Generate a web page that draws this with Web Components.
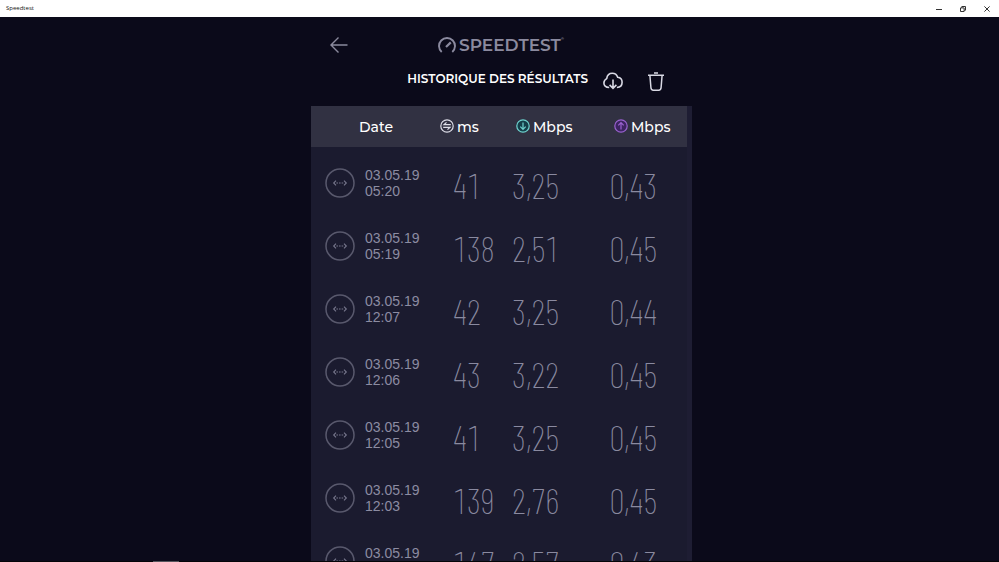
<!DOCTYPE html>
<html lang="fr">
<head>
<meta charset="utf-8">
<meta name="viewport" content="width=device-width, initial-scale=1">
<title>Speedtest</title>
<style>
  body { margin: 0; background: #0b0a1a; font-family: "Montserrat", "Noto Sans", sans-serif; color: #fff; -webkit-font-smoothing: antialiased; }
</style>
</head>
<body>
<speedtest-app></speedtest-app>

<template id="app">
  <style>
    :host { display: flex; flex-direction: column; height: 100vh; overflow: hidden; }
    main { flex: 1; min-height: 0; display: flex; flex-direction: column; box-sizing: border-box; width: 100%; max-width: 385px; margin: 0 auto; padding-left: 4px; }
    results-table { flex: 1; min-height: 0; }
  </style>
  <window-bar>Speedtest</window-bar>
  <main>
    <app-header>Historique des résultats</app-header>
    <results-table></results-table>
  </main>
  <task-edge></task-edge>
</template>

<template id="bar">
  <style>
    :host { display: flex; justify-content: space-between; align-items: center; height: 17px; flex: none; background: #fff; color: #111; font: 6px/17px "Open Sans", "Noto Sans", sans-serif; }
    .name { padding-left: 6px; }
    .controls { display: flex; }
    button { width: 24px; height: 17px; padding: 0; border: 0; background: none; color: #333; display: grid; place-items: center; }
    svg { width: 6px; height: 6px; fill: none; stroke: currentColor; }
  </style>
  <span class="name"><slot></slot></span>
  <div class="controls">
    <button aria-label="Réduire"><svg viewBox="0 0 6 6"><path d="M0 3.5h6"/></svg></button>
    <button aria-label="Restaurer"><svg viewBox="0 0 6 6"><path d="M.5 1.9h3.6v3.6H.5zM1.8 1.9V.5h3.7v3.7H4.1"/></svg></button>
    <button aria-label="Fermer"><svg viewBox="0 0 6 6"><path d="M.4.4l5.2 5.2M5.6.4L.4 5.6"/></svg></button>
  </div>
</template>

<template id="header">
  <style>
    :host { display: block; height: 89px; flex: none; margin-right: 5px; }
    button { padding: 0; border: 0; background: none; color: #d9d9e4; display: grid; place-items: center; }
    svg { display: block; fill: none; stroke: currentColor; }
    .top { display: grid; grid-template-columns: 56px 1fr 56px; align-items: center; padding-top: 16px; height: 24px; }
    .back { width: 56px; height: 24px; color: #8b8a9d; }
    .logo { display: flex; justify-content: center; align-items: center; gap: 3px; margin-left: 4px; color: #8b8a9f; font: 600 17px/24px "Montserrat", "Inter", sans-serif; }
    .brand { display: flex; }
    .brand sup { font-size: 4px; line-height: 12px; }
    .sub { display: flex; align-items: center; justify-content: flex-end; height: 24px; padding: 12px 22px 0 0; }
    h1 { margin: 0 15px 4px 0; font: 600 12px/20px "Montserrat", "Inter", sans-serif; text-transform: uppercase; white-space: nowrap; }
    .cloud { margin-right: 24px; }
  </style>
  <div class="top">
    <button class="back" aria-label="Retour"><svg width="18" height="16" viewBox="0 0 18 16" stroke-width="1.4"><path d="M17.5 8H1M8.5.6L1 8l7.5 7.4"/></svg></button>
    <div class="logo">
      <svg width="18" height="16" viewBox="0 0 18 16" stroke-width="1.9"><path d="M3.7 15A8 8 0 1 1 14.3 15"/><path d="M8 10l4.8-4.6" stroke-width="2.2"/></svg>
      <span class="brand">SPEEDTEST<sup>®</sup></span>
    </div>
  </div>
  <div class="sub">
    <h1><slot></slot></h1>
    <button class="cloud" aria-label="Télécharger"><svg width="20" height="18" viewBox="0 0 20 18" stroke-width="1.600"><path d="M6.200 15.500C2.500 15.500.9 13.500.9 11.100.9 9 2.200 7.400 3.700 6.600 4.200 3.400 6.500 1.300 9.300 1.300c2.600 0 4.500 1.500 5.400 3.900 2.600.3 4.400 2.300 4.400 5 0 2.900-1.700 5.100-5.200 5.300M10 7.500v8.600M6.600 12.900L10 16.300l3.400-3.400"/></svg></button>
    <button aria-label="Supprimer"><svg width="18" height="19" viewBox="0 0 18 19" stroke-width="1.500"><path d="M1 3.200h16M7 1h4M2.900 3.200l1 12.300q.2 2.700 2.400 2.700h5.400q2.200 0 2.400-2.700l1-12.300"/></svg></button>
  </div>
</template>

<template id="table">
  <style>
    :host { display: block; background: #1b1b2f; border-right: 5px solid #1e1d33; overflow-y: auto; scrollbar-width: none; }
    table { width: 100%; table-layout: fixed; border-collapse: collapse; }
    .c1 { width: 129px; } .c2 { width: 72px; } .c3 { width: 98px; }
    th { position: sticky; top: 0; z-index: 1; box-sizing: border-box; height: 41px; padding: 0 0 0 4px; background: #313142; text-align: left; font: 500 14px/24px "Montserrat", "Noto Sans", sans-serif; }
    th:first-child { padding-left: 48px; }
    th:nth-child(2) { padding-left: 0; }
    .unit { display: flex; align-items: center; gap: 3px; }
    td { height: 63px; padding: 0; box-sizing: border-box; }
    .value { padding-top: 4px; color: #8a8aa0; font: 200 35px/40px "Barlow Condensed", "Roboto Condensed", "Liberation Sans Narrow", sans-serif; font-variant-numeric: tabular-nums; }
    tr:first-child td { padding-top: 4px; height: 67px; }
    tr:first-child .value { padding-top: 8px; }
    td:nth-child(2) { padding-left: 13px; }
    .test { display: flex; align-items: center; gap: 10px; padding-left: 14px; }
    time { display: block; width: 60px; color: #8c8ca2; font: 14px/16px "Liberation Sans", Arial, sans-serif; }
  </style>
  <table>
    <colgroup><col class="c1"><col class="c2"><col class="c3"><col></colgroup>
    <thead><tr>
      <th scope="col">Date</th>
      <th scope="col"><span class="unit"><metric-icon kind="ping"></metric-icon>ms</span></th>
      <th scope="col"><span class="unit"><metric-icon kind="down"></metric-icon>Mbps</span></th>
      <th scope="col"><span class="unit"><metric-icon kind="up"></metric-icon>Mbps</span></th>
    </tr></thead>
    <tbody></tbody>
  </table>
</template>

<script>
  class Base extends HTMLElement {
    constructor() {
      super();
      const t = document.getElementById(this.constructor.tpl);
      this.attachShadow({ mode: "open" }).append(t.content.cloneNode(true));
    }
  }
  class WindowBar extends Base { static tpl = "bar"; }
  class AppHeader extends Base { static tpl = "header"; }
  class SpeedtestApp extends Base { static tpl = "app"; }

  class MetricIcon extends HTMLElement {
    connectedCallback() {
      const icons = {
        ping: ["#dedee8", "none", "M10.800 5.700H4L6.500 3.400M3.200 8.300H10L7.500 10.600"],
        down: ["#6fd3cf", "#143f4a", "M7 3.500v6.700M4.300 7.600L7 10.300l2.700-2.700"],
        up: ["#9a62d0", "#3d2462", "M7 10.500V3.800M4.300 6.400L7 3.700l2.700 2.700"]
      };
      const [color, fill, path] = icons[this.getAttribute("kind")];
      this.attachShadow({ mode: "open" }).innerHTML = `
        <style>:host { display: block; flex: none; width: 14px; height: 14px; margin-bottom: 2px; } svg { display: block; }</style>
        <svg width="14" height="14" viewBox="0 0 14 14" fill="none" stroke="${color}" stroke-width="1.200">
          <circle cx="7" cy="7" r="6.200" fill="${fill}"/><path d="${path}"/></svg>`;
    }
  }

  class ConnectionIcon extends HTMLElement {
    connectedCallback() {
      this.attachShadow({ mode: "open" }).innerHTML = `
        <style>:host { display: block; flex: none; } svg { display: block; }</style>
        <svg width="30" height="30" viewBox="0 0 30 30" fill="none" stroke="#59596d" stroke-width="1.500">
          <circle cx="15" cy="15" r="14"/>
          <g stroke="#77778c" stroke-width="1.100"><path d="M11 12.700L8.700 15l2.300 2.300M19 12.700l2.300 2.300-2.300 2.300"/><path d="M11.400 15h7.400" stroke-dasharray="1.600 1"/></g></svg>`;
    }
  }

  class TaskEdge extends HTMLElement {
    connectedCallback() {
      this.attachShadow({ mode: "open" }).innerHTML = `
        <style>:host { display: flex; flex: none; height: 1px; background: #050509; padding-left: 153px; } i { width: 26px; background: #55555c; }</style><i></i>`;
    }
  }

  class ResultsTable extends Base {
    static tpl = "table";
    connectedCallback() {
      const rows = [
        ["05:20", "41", "3,25", "0,43"],
        ["05:19", "138", "2,51", "0,45"],
        ["12:07", "42", "3,25", "0,44"],
        ["12:06", "43", "3,22", "0,45"],
        ["12:05", "41", "3,25", "0,45"],
        ["12:03", "139", "2,76", "0,45"],
        ["", "147", "2,57", "0,43"]
      ];
      this.shadowRoot.querySelector("tbody").innerHTML = rows.map(([t, ping, down, up]) => `
        <tr><td><div class="test"><connection-icon></connection-icon><time>03.05.19<br>${t || "&nbsp;"}</time></div></td>
        <td class="value">${ping}</td><td class="value">${down}</td><td class="value">${up}</td></tr>`).join("");
    }
  }

  customElements.define("metric-icon", MetricIcon);
  customElements.define("connection-icon", ConnectionIcon);
  customElements.define("task-edge", TaskEdge);
  customElements.define("window-bar", WindowBar);
  customElements.define("app-header", AppHeader);
  customElements.define("results-table", ResultsTable);
  customElements.define("speedtest-app", SpeedtestApp);
</script>
</body>
</html>
